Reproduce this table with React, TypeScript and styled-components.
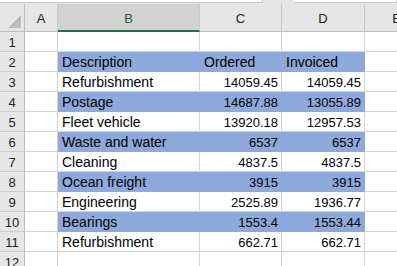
import { ReactElement } from "react";
import styled, { createGlobalStyle } from "styled-components";

const GlobalStyle = createGlobalStyle`
  html, body {
    margin: 0;
    padding: 0;
    background: #fff;
    overflow: hidden;
  }
  * {
    box-sizing: border-box;
  }
`;

const Window = styled.div`
  width: 397px;
  height: 266px;
  overflow: hidden;
  background: #e6e6e6;
  font-family: "Liberation Sans", Arial, sans-serif;
`;

const FormulaStrip = styled.div`
  height: 4px;
  display: flex;
  gap: 31px;
  background: #e6e6e6;
`;

const FormulaBox = styled.div<{ $w: string }>`
  flex: ${(p) => p.$w};
  height: 3px;
  background: #fff;
  border-bottom: 1px solid #c6c6c6;
  border-right: 1px solid #c6c6c6;
`;

const Sheet = styled.div`
  display: grid;
  grid-template-columns: 25px 33px 142px 82px 83px 64px;
  grid-template-rows: 28px repeat(12, 20px);
  background: #fff;
`;

const Corner = styled.div`
  background: #e6e6e6;
  border-right: 1px solid #bdbdbd;
  border-bottom: 1px solid #bdbdbd;
  display: flex;
  align-items: flex-end;
  justify-content: flex-end;
  padding: 0 3px 3px 0;
`;

const ColHead = styled.div<{ $active?: boolean }>`
  background: ${(p) => (p.$active ? "#d2d2d2" : "#e6e6e6")};
  border-right: 1px solid #c8c8c8;
  border-bottom: ${(p) => (p.$active ? "2px solid #217346" : "1px solid #bdbdbd")};
  color: ${(p) => (p.$active ? "#1f5f3b" : "#222")};
  font-size: 13px;
  display: flex;
  align-items: center;
  justify-content: center;
  padding-top: 2px;
`;

const RowHead = styled.div`
  background: #e6e6e6;
  border-right: 1px solid #bdbdbd;
  border-bottom: 1px solid #cdcdcd;
  color: #222;
  font-size: 13px;
  display: flex;
  align-items: center;
  justify-content: center;
  padding-top: 1px;
`;

const Cell = styled.div<{ $fill?: boolean; $num?: boolean }>`
  background: ${(p) => (p.$fill ? "#8ea9db" : "#fff")};
  border-right: 1px solid ${(p) => (p.$fill ? "#8ea9db" : "#d4d4d4")};
  border-bottom: 1px solid ${(p) => (p.$fill ? "#8ea9db" : "#d4d4d4")};
  color: #000;
  font-size: ${(p) => (p.$num ? "13px" : "14px")};
  display: flex;
  align-items: center;
  justify-content: ${(p) => (p.$num ? "flex-end" : "flex-start")};
  padding: 1px ${(p) => (p.$num ? "3px" : "0")} 0 ${(p) => (p.$num ? "0" : "4px")};
  white-space: nowrap;
  overflow: hidden;
`;

interface Item {
  desc: string;
  ordered: string;
  invoiced: string;
}

const items: Item[] = [
  { desc: "Refurbishment", ordered: "14059.45", invoiced: "14059.45" },
  { desc: "Postage", ordered: "14687.88", invoiced: "13055.89" },
  { desc: "Fleet vehicle", ordered: "13920.18", invoiced: "12957.53" },
  { desc: "Waste and water", ordered: "6537", invoiced: "6537" },
  { desc: "Cleaning", ordered: "4837.5", invoiced: "4837.5" },
  { desc: "Ocean freight", ordered: "3915", invoiced: "3915" },
  { desc: "Engineering", ordered: "2525.89", invoiced: "1936.77" },
  { desc: "Bearings", ordered: "1553.4", invoiced: "1553.44" },
  { desc: "Refurbishment", ordered: "662.71", invoiced: "662.71" },
];

function CornerMark(): ReactElement {
  return (
    <svg width="13" height="13" viewBox="0 0 13 13">
      <polygon points="13,0 13,13 0,13" fill="#bcbcbc" />
    </svg>
  );
}

export default function App(): ReactElement {
  return (
    <Window>
      <GlobalStyle />
      <FormulaStrip>
        <FormulaBox $w="0 0 263px" />
        <FormulaBox $w="1" />
      </FormulaStrip>
      <Sheet>
        <Corner>
          <CornerMark />
        </Corner>
        <ColHead>A</ColHead>
        <ColHead $active>B</ColHead>
        <ColHead>C</ColHead>
        <ColHead>D</ColHead>
        <ColHead>E</ColHead>

        <RowHead>1</RowHead>
        <Cell />
        <Cell />
        <Cell />
        <Cell />
        <Cell />

        <RowHead>2</RowHead>
        <Cell />
        <Cell $fill>Description</Cell>
        <Cell $fill>Ordered</Cell>
        <Cell $fill>Invoiced</Cell>
        <Cell />

        {items.map((it, i) => {
          const fill = i % 2 === 1;
          return [
            <RowHead key={`h${i}`}>{i + 3}</RowHead>,
            <Cell key={`a${i}`} />,
            <Cell key={`b${i}`} $fill={fill}>{it.desc}</Cell>,
            <Cell key={`c${i}`} $fill={fill} $num>{it.ordered}</Cell>,
            <Cell key={`d${i}`} $fill={fill} $num>{it.invoiced}</Cell>,
            <Cell key={`e${i}`} />,
          ];
        })}

        <RowHead>12</RowHead>
        <Cell />
        <Cell />
        <Cell />
        <Cell />
        <Cell />
      </Sheet>
    </Window>
  );
}
